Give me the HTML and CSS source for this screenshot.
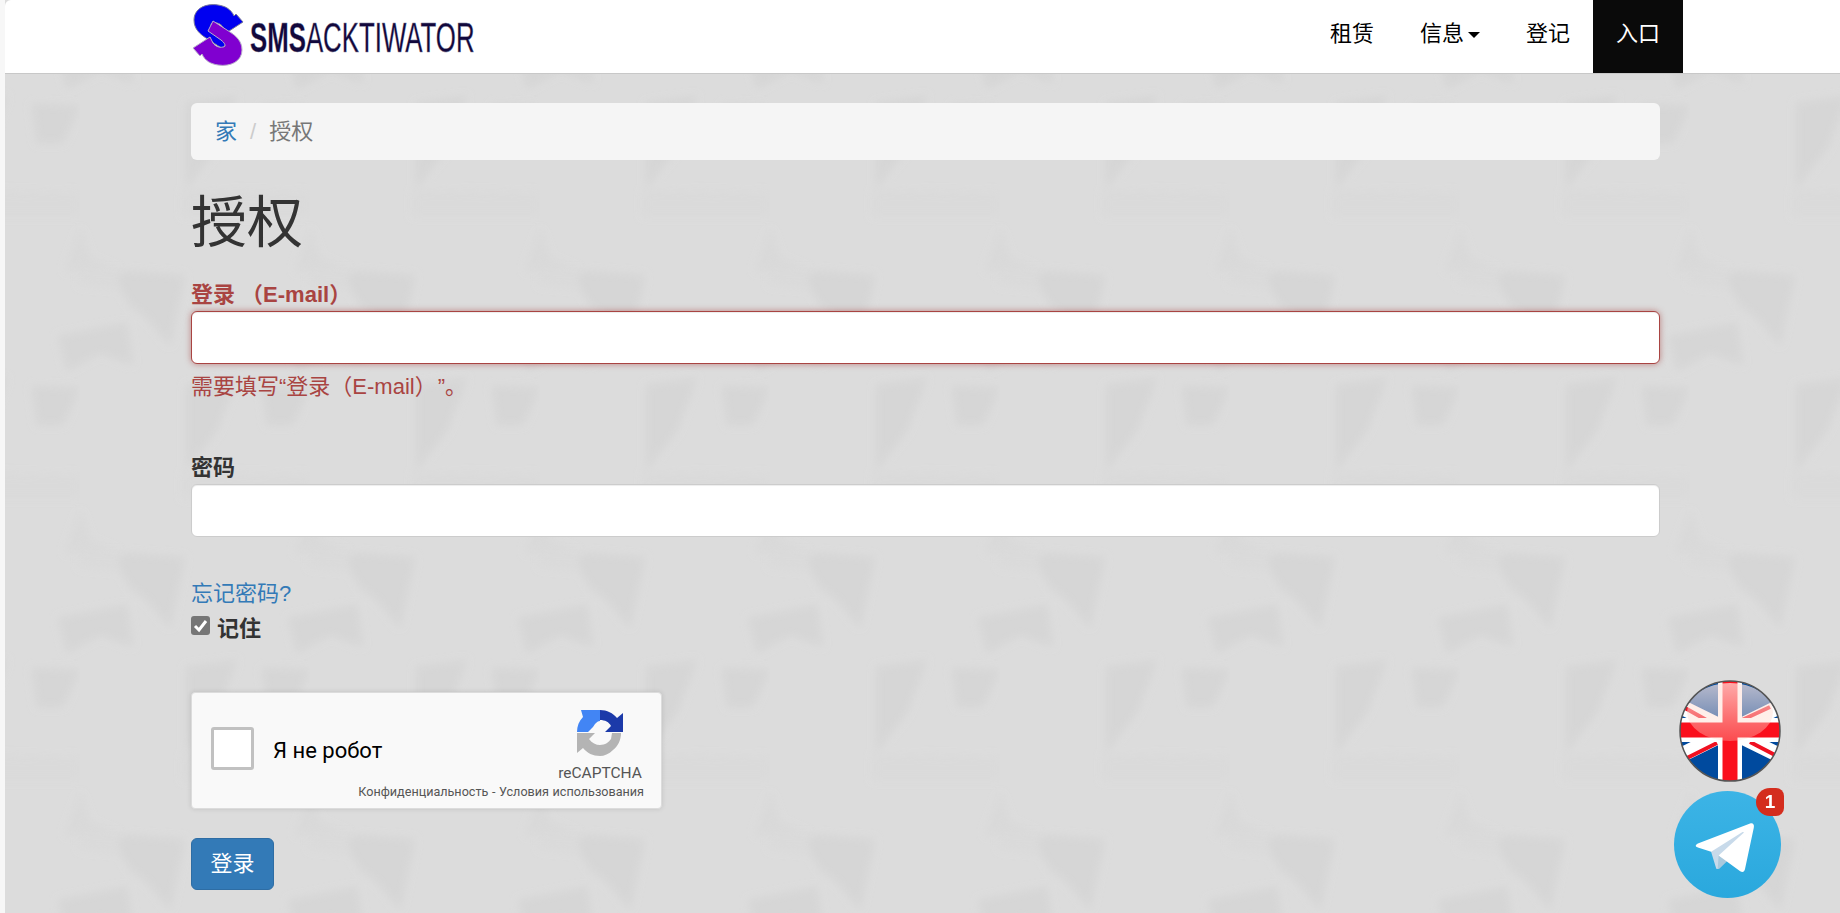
FILE: index.html
```html
<!DOCTYPE html>
<html lang="zh-cmn-Hans">
	<head>
		<meta charset="utf-8">
		<title>授权</title>
		<link rel="stylesheet" href="styles.css">
	</head>
	<body>
		<header class="topbar">
			<div class="topbar-in">
				<a class="brand" href="#">
					<svg class="brand-logo" width="59" height="70" viewBox="0 0 59 70">
						<defs>
							<path id="arrow" d="M27 5C14 3 3 9 3 20c0 9 6 14 12 18l17 11 5-10-13-9c-5-4-5-7-2-7 4-1 8 1 10 4l3 6 17-11-7-8-2 2C40 9 34 6 27 5z"/>
						</defs>
						<use href="#arrow" fill="#0000f0" stroke="#7a7a98" stroke-width="1"/>
						<use href="#arrow" transform="rotate(180 27 35)" fill="#8000d0" stroke="#b8b0c8" stroke-width="1"/>
					</svg>
					<span class="brand-text"><b>SMS</b>ACKTIWATOR</span>
				</a>
				<nav class="nav">
					<a class="nav-link" href="#">租赁</a>
					<a class="nav-link" href="#">信息<span class="caret"></span></a>
					<a class="nav-link" href="#">登记</a>
					<a class="nav-link nav-active" href="#">入口</a>
				</nav>
			</div>
		</header>

		<main class="container">
			<div class="breadcrumb">
				<a href="#">家</a>
				<span class="sep">/</span>
				<span class="current">授权</span>
			</div>
			<h1>授权</h1>

			<form>
				<div class="group has-error">
					<label>登录 （E-mail）</label>
					<input class="control" type="text">
					<div class="help">需要填写“登录（E-mail）<span class="quote">”</span>。</div>
				</div>
				<div class="group group-pass">
					<label>密码</label>
					<input class="control" type="password">
				</div>
				<a class="forgot" href="#">忘记密码?</a>
				<div class="remember">
					<span class="check">
						<svg width="19" height="19" viewBox="0 0 19 19"><path d="M4 10l4 4 7-9" fill="none" stroke="#fff" stroke-width="3"/></svg>
					</span>
					<b>记住</b>
				</div>

				<div class="captcha">
					<span class="captcha-box"></span>
					<span class="captcha-text">Я не робот</span>
					<div class="captcha-brand">
						<svg width="48" height="48" viewBox="0 0 48 48">
							<path d="M24 1c7 0 13 3 17 8l6-5v19H29l6-6c-2-4-6-6-11-6z" fill="#1c3aa9"/>
							<path d="M5 1h19v11c-2 0-3 1-5 3l-2 3-5 5H1C1 17 3 12 7 8z" fill="#4285f4"/>
							<path d="M1 24h18l-6 6c3 4 7 6 11 6 5 0 9-3 11-6l1-6h9c0 7-3 13-8 17-4 4-9 6-13 6-7 0-13-3-17-8l-6 5z" fill="#b4b4b4"/>
						</svg>
						<span>reCAPTCHA</span>
					</div>
					<div class="captcha-links">Конфиденциальность - Условия использования</div>
				</div>

				<button class="btn" type="button">登录</button>
			</form>
		</main>

		<a class="lang" href="#">
			<svg width="102" height="102" viewBox="0 0 102 102">
				<defs>
					<clipPath id="round"><circle cx="51" cy="51" r="50"/></clipPath>
					<linearGradient id="gloss" x1="0" y1="0" x2="0" y2="1">
						<stop offset="0" stop-color="#ffe6e0" stop-opacity=".72"/>
						<stop offset="1" stop-color="#ffd8c8" stop-opacity=".3"/>
					</linearGradient>
				</defs>
				<g clip-path="url(#round)">
					<rect width="102" height="102" fill="#004a9e"/>
					<path d="M-4 24l110 54M106 24L-4 78" stroke="#fff" stroke-width="15"/>
					<path d="M6 28l25 14M91 27L63 40M8 78l30-15M96 75L71 62" stroke="#f01020" stroke-width="4"/>
					<path d="M51 0v102M0 50h102" stroke="#fff" stroke-width="24"/>
					<path d="M51 0v102M0 50h102" stroke="#fa0f1c" stroke-width="15"/>
					<ellipse cx="51" cy="32" rx="43" ry="29" fill="url(#gloss)"/>
				</g>
				<circle cx="51" cy="51" r="50" fill="none" stroke="#555" stroke-width="1.5"/>
			</svg>
		</a>
		<a class="tg" href="#">
			<svg width="107" height="107" viewBox="0 0 240 240">
				<defs>
					<linearGradient id="tgsky" x1="0" y1="0" x2="0" y2="1">
						<stop offset="0" stop-color="#3cb4e6"/>
						<stop offset="1" stop-color="#2aa8dd"/>
					</linearGradient>
				</defs>
				<circle cx="120" cy="120" r="120" fill="url(#tgsky)"/>
				<path d="M98 175c-3.888 0-3.227-1.468-4.568-5.17L82 132.207 170 80" fill="#c8daea"/>
				<path d="M98 175c3 0 4.325-1.372 6-3l16-15.558-19.958-12.035" fill="#a9c9dd"/>
				<path d="M100.04 144.41l48.36 35.729c5.519 3.045 9.501 1.468 10.876-5.123l19.685-92.763c2.015-8.08-3.08-11.746-8.36-9.349l-115.59 44.571c-7.89 3.165-7.843 7.567-1.438 9.528l29.663 9.259 68.673-43.325c3.242-1.966 6.218-.91 3.776 1.258" fill="#fff"/>
			</svg>
			<span class="badge">1</span>
		</a>
	</body>
</html>
```

FILE: styles.css
```css
html{ background: #f7f7f7; }
body{
	margin: 0 0 0 5px; min-height: 913px; box-sizing: border-box; overflow: hidden;
	font-family: "Liberation Sans", "Noto Sans CJK SC", Arial, sans-serif; font-size: 22px; line-height: 30px; color: #333;
	background-color: #dcdcdc;
	background-image: url("data:image/svg+xml,%3Csvg xmlns='http://www.w3.org/2000/svg' xmlns:xlink='http://www.w3.org/1999/xlink' width='230' height='282'%3E%3Cdefs%3E%3Cfilter id='b' filterUnits='userSpaceOnUse' x='-60' y='-60' width='350' height='400'%3E%3CfeGaussianBlur stdDeviation='4'/%3E%3C/filter%3E%3C/defs%3E%3Cg id='s' filter='url(%23b)' fill='%23d6d6d6'%3E%3Cpolygon points='40,13 105,17 90,88 67,60 50,47 40,30'/%3E%3Cpolygon points='-22,78 47,65 53,107 20,95 -13,113'/%3E%3Cpolygon points='106,127 157,120 137,173 113,203 106,213'/%3E%3Cpolygon points='182,128 230,130 213,167 187,167'/%3E%3Cpolygon points='0,253 10,282 40,295 -15,295' fill='%23d9d9d9'/%3E%3Cpolygon points='0,13 40,13 40,30 0,27' fill='%23dadada'/%3E%3Cpolygon points='103,215 230,217 230,240 103,240' fill='%23dadada'/%3E%3C/g%3E%3Cuse xlink:href='%23s' y='-282'/%3E%3Cuse xlink:href='%23s' x='230'/%3E%3Cuse xlink:href='%23s' x='230' y='-282'/%3E%3C/svg%3E");
	background-position: 75px 258px;
}
a{ text-decoration: none; color: #337ab7; }

.topbar{ height: 73px; background: #fff; border-bottom: 1px solid #c8c8c8; border-top-left-radius: 6px; }
.topbar-in{ display: flex; justify-content: space-between; margin-left: 186px; width: 1492px; height: 73px; }
.brand{ display: flex; width: 290px; height: 70px; }
.brand-logo{ display: block; flex: none; }
.brand-text{ display: block; height: 70px; font-size: 43px; line-height: 74px; color: #12083c; white-space: nowrap; -webkit-text-stroke: .4px #7a7a98; transform: scaleX(.6); transform-origin: 0 50%; }
.nav{ display: flex; }
.nav-link{ display: flex; align-items: center; height: 67px; padding: 0 23px; color: #000; }
.nav-active{ height: 73px; padding-bottom: 6px; box-sizing: border-box; background: #0a0a0a; color: #fff; }
.caret{ width: 0; height: 0; margin-left: 4px; margin-top: 2px; border-top: 6px solid #000; border-left: 6px solid transparent; border-right: 6px solid transparent; }

.container{ width: 1469px; margin-left: 186px; padding-top: 29px; }
.breadcrumb{ display: flex; align-items: center; gap: 13px; box-sizing: border-box; height: 57px; padding: 0 24px; background: #f5f5f5; border-radius: 6px; }
.sep{ color: #ccc; }
.current{ color: #777; }
h1{ margin: 32px 0 26px; font-size: 56px; line-height: 62px; font-weight: normal; }
label{ display: block; margin-bottom: 1px; font-weight: bold; }
.control{ display: block; box-sizing: border-box; width: 100%; height: 53px; padding: 9px 18px; background: #fff; border: 1px solid #ccc; border-radius: 6px; box-shadow: inset 0 1px 1px rgba(0,0,0,.075); font-size: 22px; }
.help{ margin-top: 8px; }
.quote{ margin-left: 12px; }
.has-error label, .has-error .help{ color: #a94442; }
.has-error .control{ border-color: #a94442; box-shadow: inset 0 1px 1px rgba(0,0,0,.075), 0 0 6px rgba(169,68,66,.6); }
.group-pass{ margin-top: 51px; }
.forgot{ display: block; margin-top: 42px; }
.remember{ display: flex; align-items: center; gap: 7px; margin-top: 5px; height: 30px; color: #333; }
.check{ display: block; width: 19px; height: 19px; margin-top: -8px; background: #767676; border-radius: 3px; }
.check svg{ display: block; }

.captcha{ position: relative; box-sizing: border-box; display: flex; align-items: center; width: 471px; height: 117px; margin: 48px 0 29px; padding-left: 19px; background: #f9f9f9; border: 1px solid #dcdcdc; border-radius: 4px; box-shadow: 0 0 5px rgba(0,0,0,.12); font-family: Roboto, "Liberation Sans", sans-serif; }
.captcha-box{ box-sizing: border-box; width: 43px; height: 43px; margin-top: -4px; background: #fff; border: 3px solid #c1c1c1; border-radius: 3px; }
.captcha-text{ margin-left: 19px; margin-top: 1px; color: #000; }
.captcha-brand{ position: absolute; top: 16px; right: 19px; display: flex; flex-direction: column; align-items: center; width: 84px; font-size: 15.5px; line-height: 18px; color: #555; }
.captcha-brand svg{ display: block; margin-bottom: 7px; }
.captcha-links{ position: absolute; right: 17px; top: 91px; font-size: 12.6px; line-height: 16px; color: #555; white-space: nowrap; word-spacing: .5px; }
.btn{ display: block; width: 83px; height: 52px; padding: 0; background: #337ab7; border: 1px solid #2e6da4; border-radius: 6px; color: #fff; font: inherit; }

.lang{ position: fixed; left: 1679px; top: 680px; display: block; width: 102px; height: 102px; }
.lang svg, .tg svg{ display: block; }
.tg{ position: fixed; left: 1674px; top: 791px; display: block; width: 107px; height: 107px; }
.badge{ position: absolute; right: -3px; top: -3px; width: 28px; height: 28px; background: #d42d1e; border-radius: 14px 8px 8px 14px; color: #fff; font-size: 19px; font-weight: bold; line-height: 28px; text-align: center; }
```
